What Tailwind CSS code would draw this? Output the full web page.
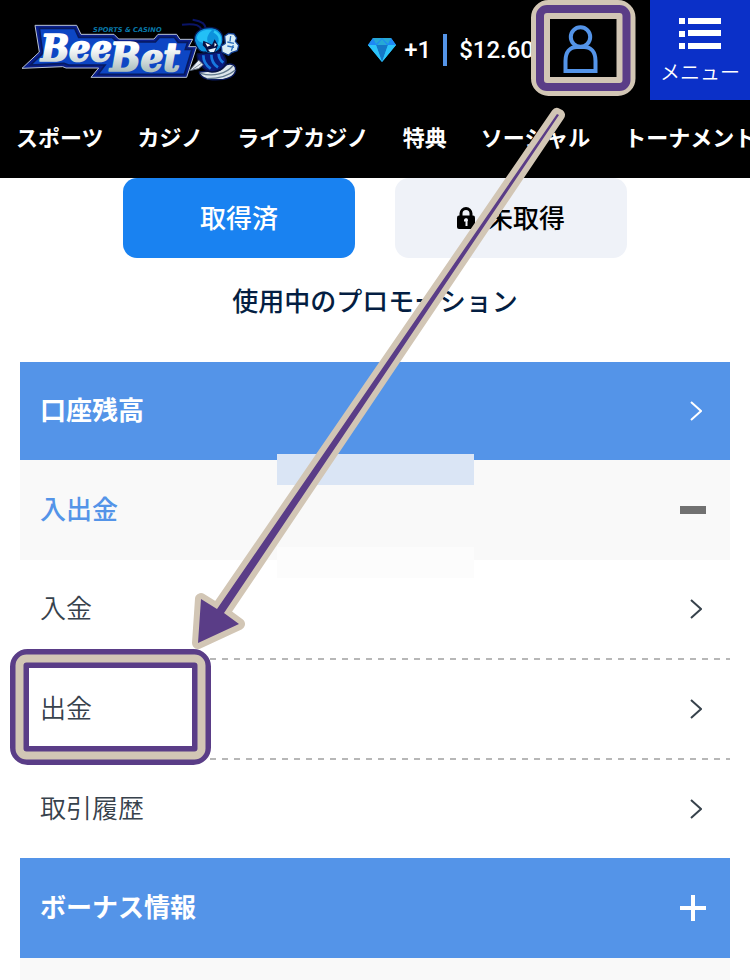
<!doctype html>
<html lang="ja">
  <head>
    <meta charset="UTF-8" />
    <meta name="viewport" content="width=device-width, initial-scale=1.0" />
    <title>BeeBet</title>
    <script src="https://cdn.jsdelivr.net/npm/@tailwindcss/browser@4"></script>
  </head>
  <body class="relative flex flex-col min-h-screen overflow-x-hidden bg-white font-['Noto_Sans_CJK_JP',sans-serif] text-[#37424c]">
    <header class="bg-black text-white">
      <div class="flex items-start justify-between">
        <!-- ロゴ -->
        <a href="#" class="block pl-3 pt-3" aria-label="BeeBet">
          <svg class="w-[232px] h-[76px]" viewBox="6 6 696 228">
            <defs>
              <linearGradient id="silver" gradientUnits="userSpaceOnUse" x1="0" y1="70" x2="0" y2="190">
                <stop offset="0.35" stop-color="#fff" />
                <stop offset="1" stop-color="#a3b8b8" />
              </linearGradient>
            </defs>
            <path d="M75 46H200L213 73H312L326 87H432L444 73H500L510 88H548L536 110H560L530 202H243L266 174H168L158 170L36 175L88 126Z" fill="#0a1f8c" stroke="#b9c4d4" stroke-width="3" />
            <path d="M88 55H194L206 82H306L322 96H436L448 82H493L504 97H533L526 118H546L523 193H264L285 165H176L162 160L62 165L98 130Z" fill="#0d46c4" stroke="#071a60" stroke-width="5" />
            <g font-family="DejaVu Serif Condensed, DejaVu Serif, serif" font-weight="700" font-style="italic" fill="url(#silver)" stroke="url(#silver)" stroke-width="5" stroke-linejoin="round">
              <text x="92" y="153" font-size="112">Bee</text>
              <text x="300" y="184" font-size="120">Bet</text>
            </g>
            <text x="352" y="65" text-anchor="middle" font-family="DejaVu Sans, sans-serif" font-weight="700" font-style="italic" font-size="20" fill="#0878a8">SPORTS &amp; CASINO</text>
            <!-- ハチ -->
            <g stroke-linejoin="round">
              <path d="M576 62C570 46 560 40 516 44M588 58C586 44 580 34 548 29" fill="none" stroke="#0a1466" stroke-width="6" />
              <path d="M568 186C572 206 600 212 640 208C668 204 680 190 676 172C672 162 660 160 650 164L630 180Z" fill="#dde6ec" stroke="#0a1a5c" stroke-width="4" />
              <path d="M572 190C610 202 650 190 668 168M590 206C626 206 658 196 676 180" fill="none" stroke="#61788c" stroke-width="4" />
              <path d="M562 132L636 124L648 150C650 170 632 184 606 186C584 184 560 160 562 132Z" fill="#0a1a7c" stroke="#061246" stroke-width="5" />
              <path d="M580 136C580 154 590 168 602 176M604 134C604 150 612 164 624 172M626 132C626 144 632 152 640 158" fill="none" stroke="#1778e0" stroke-width="8" />
              <path d="M553 92C552 62 580 50 606 53C636 57 646 84 634 108C628 126 604 136 586 126C570 130 560 114 553 92Z" fill="#0c91dc" stroke="#06164e" stroke-width="4" />
              <path d="M560 84C564 64 586 57 606 60C594 72 588 86 594 96C580 102 566 98 560 84Z" fill="#23c0f6" />
              <path d="M612 64C632 74 634 92 626 106" fill="none" stroke="#2cc8f6" stroke-width="8" />
              <path d="M580 92L606 104L614 88L624 106L614 128L592 126L586 114L578 106Z" fill="#071246" />
              <path d="M586 98L602 106L592 110ZM614 98L620 104L613 110Z" fill="#fff" />
              <path d="M594 119L618 113L612 126L600 126Z" fill="#e9f7fc" />
              <path d="M634 108L646 100L644 78L656 70L672 72L680 84L676 94L686 106L682 122L664 128L656 136L636 126Z" fill="#d9eef6" stroke="#113f92" stroke-width="4" />
              <path d="M652 96L672 100M652 108L672 112M662 78L660 94M670 106L664 122" stroke="#2a6ebc" stroke-width="4" />
              <path d="M538 182L566 150L580 164L566 176Z" fill="#e8edf2" stroke="#4f5e70" stroke-width="3" />
              <path d="M548 178L574 160" stroke="#7e8b98" stroke-width="3" />
            </g>
          </svg>
        </a>

        <div class="flex items-start">
          <div class="flex items-center h-[100px] font-[Roboto,sans-serif] text-2xl font-medium">
            <svg class="w-7 h-6 mr-2" viewBox="0 0 28 24">
              <path d="M5 0H23L28 7L14 24L0 7Z" fill="#29b6f6" />
              <path d="M5 0H23L28 7H0Z" fill="#1e88f5" />
              <path d="M9 7L14 1L19 7ZM5 0L8 6L14 0ZM23 0L20 6L14 0Z" fill="#26a9d6" />
              <path d="M8 7H20L14 24Z" fill="#1478c8" />
              <path d="M0 7H8L14 24ZM28 7H20L14 24Z" fill="#2cc4fa" />
            </svg>
            <span>+1</span>
            <span class="w-1 h-8 mx-3 bg-[#5494e8]"></span>
            <span>$12.60</span>
          </div>
          <a href="#" class="flex items-center h-[98px] ml-7 mr-[52px]" aria-label="アカウント">
            <svg class="w-9 h-12" viewBox="0 0 36 48" fill="none" stroke="#5494e8" stroke-width="4">
              <circle cx="18.500" cy="12" r="9.700" />
              <path d="M3.500 46V36C3.500 27 8 22 15 22H22C29 22 33.500 27 33.500 36V46Z" />
            </svg>
          </a>
          <button type="button" class="flex flex-col items-center w-[100px] h-[100px] pt-[18px] bg-[#0b30c8]">
            <svg class="w-[42px] h-8" viewBox="0 0 42 32" fill="#fff">
              <path d="M0 0H6V6H0ZM9 0H42V6H9ZM0 13H6V19H0ZM9 12H42V18H9ZM0 25H6V31H0ZM9 25H42V31H9Z" />
            </svg>
            <span class="mt-2 text-xl leading-7 font-[350] whitespace-nowrap">メニュー</span>
          </button>
        </div>
      </div>

      <nav class="flex gap-[34px] h-[78px] pl-4 pt-5 overflow-hidden text-[22px] leading-8 font-bold whitespace-nowrap">
        <a href="#">スポーツ</a>
        <a href="#">カジノ</a>
        <a href="#">ライブカジノ</a>
        <a href="#">特典</a>
        <a href="#">ソーシャル</a>
        <a href="#">トーナメント</a>
      </nav>
    </header>

    <main class="flex flex-col flex-1">
      <div class="flex justify-center gap-10 text-[26px] font-medium">
        <button type="button" class="w-[232px] h-20 pb-1 rounded-[14px] bg-[#1982f1] text-white">取得済</button>
        <button type="button" class="flex items-center justify-center gap-3 w-[232px] h-20 rounded-[14px] bg-[#eff2f8] text-black">
          <svg class="w-[18px] h-[22px]" viewBox="0 0 18 22">
            <path d="M4 10V6.500A5 5 0 0 1 14 6.500V10" fill="none" stroke="#000" stroke-width="3" />
            <rect y="8.500" width="18" height="13.500" rx="2" />
            <path d="M7 13A2 2 0 1 1 10.500 14.500V19H8.500V14.500H7Z" fill="#eff2f8" />
          </svg>
          <span class="pb-1">未取得</span>
        </button>
      </div>

      <h2 class="mt-[22px] mb-[42px] text-center text-[26px] leading-10 font-medium text-[#041e42]">使用中のプロモーション</h2>

      <div class="flex flex-col flex-1 mx-5 text-[26px]">
        <a href="#" class="flex items-center justify-between h-[98px] pl-5 pr-7 bg-[#5494e8] text-white font-bold">
          <span class="pb-1.5">口座残高</span>
          <svg class="w-3 h-5" viewBox="0 0 12 20" fill="none" stroke="currentColor" stroke-width="2"><path d="M1 1L11 10L1 19" /></svg>
        </a>
        <button type="button" class="flex items-center justify-between h-[100px] pl-5 pr-6 bg-[#f9f9f9] text-[#5494e8] font-medium">
          <span class="pb-1.5">入出金</span>
          <span class="w-[26px] h-2 bg-[#717171]"></span>
        </button>
        <a href="#" class="flex items-center justify-between h-[98px] pl-5 pr-7 font-[350]">
          <span class="pb-1.5">入金</span>
          <svg class="w-3 h-5" viewBox="0 0 12 20" fill="none" stroke="currentColor" stroke-width="2"><path d="M1 1L11 10L1 19" /></svg>
        </a>
        <div class="h-0.5 bg-[repeating-linear-gradient(90deg,#b7b7b7_0_4px,transparent_4px_10px,#b7b7b7_10px_12px)]"></div>
        <a href="#" class="flex items-center justify-between h-[98px] pl-5 pr-7 font-[350]">
          <span class="pb-1.5">出金</span>
          <svg class="w-3 h-5" viewBox="0 0 12 20" fill="none" stroke="currentColor" stroke-width="2"><path d="M1 1L11 10L1 19" /></svg>
        </a>
        <div class="h-0.5 bg-[repeating-linear-gradient(90deg,#b7b7b7_0_4px,transparent_4px_10px,#b7b7b7_10px_12px)]"></div>
        <a href="#" class="flex items-center justify-between h-[98px] pl-5 pr-7 font-[350]">
          <span class="pb-1.5">取引履歴</span>
          <svg class="w-3 h-5" viewBox="0 0 12 20" fill="none" stroke="currentColor" stroke-width="2"><path d="M1 1L11 10L1 19" /></svg>
        </a>
        <button type="button" class="flex items-center justify-between h-[100px] pl-5 pr-6 bg-[#5494e8] text-white font-bold">
          <span class="pb-1.5">ボーナス情報</span>
          <svg class="w-[26px] h-[26px]" viewBox="0 0 26 26" stroke="#fff" stroke-width="4"><path d="M13 0V26M0 13H26" /></svg>
        </button>
        <div class="flex-1 bg-[#f9f9f9]"></div>
      </div>
    </main>

    <!-- 操作手順の矢印と枠 -->
    <svg class="absolute top-0 left-0 w-[750px] h-[980px] pointer-events-none" viewBox="0 0 750 980">
      <rect x="277" y="454" width="197" height="31" fill="#dae5f5" />
      <rect x="277" y="547" width="197" height="31" fill="#fcfcfc" />
      <g fill="none">
        <rect x="540.500" y="9.500" width="85.500" height="77" rx="8" stroke="#d2c6b5" stroke-width="19" />
        <rect x="540" y="9" width="86.500" height="78" rx="7" stroke="#5a3d87" stroke-width="8" />
        <rect x="19.500" y="658.500" width="182" height="97" rx="8" stroke="#5a3d87" stroke-width="19" />
        <rect x="19.500" y="658.500" width="182" height="97" rx="7" stroke="#d2c6b5" stroke-width="8" />
      </g>
      <path d="M557 114L217 609L201 599L198 643L239 624L224 613L559 115Z" fill="#d2c6b5" stroke="#d2c6b5" stroke-width="12" stroke-linejoin="round" />
      <path d="M557 114L217 609L201 599L198 643L239 624L224 613L559 115Z" fill="#5a3d87" />
    </svg>
  </body>
</html>
